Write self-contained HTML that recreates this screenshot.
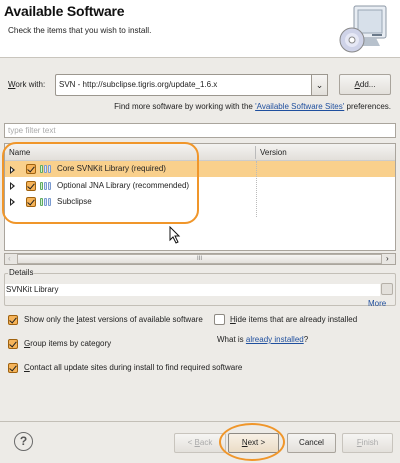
<!DOCTYPE html><html><head><style>
*{margin:0;padding:0;box-sizing:border-box}
body{width:400px;height:463px;background:#edebe7;font-family:"Liberation Sans",sans-serif;font-size:8px;color:#222;position:relative;overflow:hidden}
.a{position:absolute;white-space:nowrap}
.btn{position:absolute;border:1px solid #a9a49c;border-radius:2px;background:linear-gradient(#f6f5f3,#e3e0db);text-align:center;line-height:18px;font-size:8px}
.cb{position:absolute;width:10px;height:10px;border:1px solid #a0620e;border-radius:2px;background:#f6b45a}
.cb:after{content:"";position:absolute;left:2px;top:0px;width:3px;height:6px;border:solid #222;border-width:0 1.5px 1.5px 0;transform:rotate(40deg)}
.tri{position:absolute;width:0;height:0;border-left:5px solid #222;border-top:4px solid transparent;border-bottom:4px solid transparent}
.tri:after{content:"";position:absolute;left:-4px;top:-2px;border-left:2.5px solid #fff;border-top:2px solid transparent;border-bottom:2px solid transparent}
.ic{position:absolute;width:12px;height:8px}
.ic i{position:absolute;top:0;width:3px;height:8px;border:1px solid;border-radius:1px}
a{color:#1f4f9e}
</style></head><body>
<div class="a" style="left:0;top:0;width:400px;height:58px;background:#fff;border-bottom:1px solid #c9c5bd"></div>
<div class="a" style="left:4px;top:3px;font-size:14px;font-weight:bold;color:#111;letter-spacing:-0.2px">Available Software</div>
<div class="a" style="left:8px;top:26px;font-size:8.2px">Check the items that you wish to install.</div>
<svg class="a" style="left:336px;top:2px" width="62" height="54" viewBox="0 0 62 54">
<rect x="18" y="4" width="32" height="32" rx="2" fill="#e8edf3" stroke="#8d98a6"/>
<rect x="22" y="8" width="24" height="23" fill="#d7e0ea" stroke="#9aa6b4"/>
<path d="M28 36 L40 36 L44 44 L24 44 Z" fill="#b7c1cc"/>
<rect x="36" y="32" width="10" height="2" fill="#6b7a8a"/>
<circle cx="16" cy="38" r="12" fill="#cfd3e8" stroke="#888"/>
<circle cx="16" cy="38" r="7" fill="#e6e8f5"/>
<circle cx="16" cy="38" r="3" fill="#fff" stroke="#888"/>
</svg>
<div class="a" style="left:8px;top:80px"><u>W</u>ork with:</div>
<div class="a" style="left:55px;top:74px;width:273px;height:22px;background:#fff;border:1px solid #9c978f;border-radius:2px"></div>
<div class="a" style="left:59px;top:80px">SVN - http://subclipse.tigris.org/update_1.6.x</div>
<div class="a" style="left:311px;top:74px;width:17px;height:22px;border:1px solid #9c978f;background:linear-gradient(#f6f5f3,#e3e0db);text-align:center;line-height:20px;font-size:9px">&#8964;</div>
<div class="btn" style="left:339px;top:74px;width:52px;height:21px;line-height:19px"><u>A</u>dd...</div>
<div class="a" style="right:9px;top:102px">Find more software by working with the <a><u>'Available Software Sites'</u></a> preferences.</div>
<div class="a" style="left:4px;top:123px;width:392px;height:15px;background:#fff;border:1px solid #aaa59d;color:#aaa;padding:2px 3px">type filter text</div>
<div class="a" style="left:4px;top:143px;width:392px;height:108px;background:#fff;border:1px solid #aaa59d"></div>
<div class="a" style="left:5px;top:144px;width:390px;height:17px;background:linear-gradient(#f4f3f1,#e2dfda);border-bottom:1px solid #ccc"></div>
<div class="a" style="left:9px;top:148px">Name</div>
<div class="a" style="left:255px;top:146px;height:13px;border-left:1px solid #bbb"></div>
<div class="a" style="left:260px;top:148px">Version</div>
<div class="a" style="left:5px;top:161px;width:390px;height:16px;background:#f9d08c"></div>
<div class="a" style="left:256px;top:161px;height:56px;border-left:1px dotted #bbb"></div>
<div class="tri" style="left:10px;top:166px"></div><div class="cb" style="left:26px;top:164px"></div>
<div class="ic" style="left:40px;top:165px"><i style="left:0;border-color:#5faa5f;background:#d5f0d5"></i><i style="left:4px;border-color:#7a9ad0;background:#dde6f7"></i><i style="left:8px;border-color:#7a9ad0;background:#dde6f7"></i></div>
<div class="a" style="left:57px;top:164px">Core SVNKit Library (required)</div>
<div class="tri" style="left:10px;top:182px"></div><div class="cb" style="left:26px;top:181px"></div>
<div class="ic" style="left:40px;top:182px"><i style="left:0;border-color:#5faa5f;background:#d5f0d5"></i><i style="left:4px;border-color:#7a9ad0;background:#dde6f7"></i><i style="left:8px;border-color:#7a9ad0;background:#dde6f7"></i></div>
<div class="a" style="left:57px;top:181px">Optional JNA Library (recommended)</div>
<div class="tri" style="left:10px;top:198px"></div><div class="cb" style="left:26px;top:197px"></div>
<div class="ic" style="left:40px;top:198px"><i style="left:0;border-color:#5faa5f;background:#d5f0d5"></i><i style="left:4px;border-color:#7a9ad0;background:#dde6f7"></i><i style="left:8px;border-color:#7a9ad0;background:#dde6f7"></i></div>
<div class="a" style="left:57px;top:197px">Subclipse</div>
<svg class="a" style="left:168px;top:226px" width="14" height="18"><path d="M2 1 L2 14 L5 11 L8 17 L10 16 L7 10 L11 10 Z" fill="#fff" stroke="#111"/></svg>
<div class="a" style="left:4px;top:253px;width:392px;height:12px;border:1px solid #aaa59d;background:#e8e6e2"></div>
<div class="a" style="left:17px;top:254px;width:365px;height:10px;border:1px solid #b5b0a8;background:linear-gradient(#f6f5f3,#e3e0db);text-align:center;font-size:6px;line-height:8px;color:#777">III</div>
<div class="a" style="left:8px;top:254px;color:#aaa;line-height:10px">&lsaquo;</div>
<div class="a" style="left:386px;top:254px;line-height:10px">&rsaquo;</div>
<div class="a" style="left:4px;top:273px;width:392px;height:33px;border:1px solid #c3bfb7;border-radius:2px"></div>
<div class="a" style="left:8px;top:268px;background:#edebe7;padding:0 1px">Details</div>
<div class="a" style="left:5px;top:284px;width:375px;height:12px;background:#fff;padding:1px 1px">SVNKit Library</div>
<div class="a" style="left:381px;top:283px;width:12px;height:12px;border:1px solid #b5b0a8;border-radius:2px;background:#e3e0db"></div>
<div class="a" style="left:368px;top:299px;color:#1f4f9e">More</div>
<div class="cb" style="left:8px;top:315px"></div><div class="a" style="left:24px;top:315px">Show only the <u>l</u>atest versions of available software</div>
<div class="a" style="left:214px;top:314px;width:11px;height:11px;border:1px solid #8e8a83;border-radius:2px;background:#fff"></div><div class="a" style="left:230px;top:315px"><u>H</u>ide items that are already installed</div>
<div class="a" style="left:217px;top:335px">What is <a><u>already installed</u></a>?</div>
<div class="cb" style="left:8px;top:339px"></div><div class="a" style="left:24px;top:339px"><u>G</u>roup items by category</div>
<div class="cb" style="left:8px;top:363px"></div><div class="a" style="left:24px;top:363px"><u>C</u>ontact all update sites during install to find required software</div>
<div class="a" style="left:0;top:421px;width:400px;border-top:1px solid #c3bfb7"></div>
<div class="a" style="left:14px;top:432px;width:19px;height:19px;border:1.5px solid #6b6b6b;border-radius:50%;text-align:center;line-height:16px;font-size:12px;font-weight:bold;color:#555">?</div>
<div class="btn" style="left:174px;top:433px;width:52px;height:20px;color:#aaa;border-color:#c8c4bd">&lt; <u>B</u>ack</div>
<div class="btn" style="left:228px;top:433px;width:51px;height:20px;border-color:#8e8a83;background:linear-gradient(#f8f1e6,#ebdcc6)"><u>N</u>ext &gt;</div>
<div class="btn" style="left:287px;top:433px;width:49px;height:20px">Cancel</div>
<div class="btn" style="left:342px;top:433px;width:51px;height:20px;color:#aaa;border-color:#c8c4bd"><u>F</u>inish</div>
<div class="a" style="left:2px;top:142px;width:197px;height:82px;border:2.5px solid #f0962a;border-radius:14px"></div>
<div class="a" style="left:219px;top:423px;width:66px;height:38px;border:2.5px solid #f0962a;border-radius:50%"></div>
</body></html>
